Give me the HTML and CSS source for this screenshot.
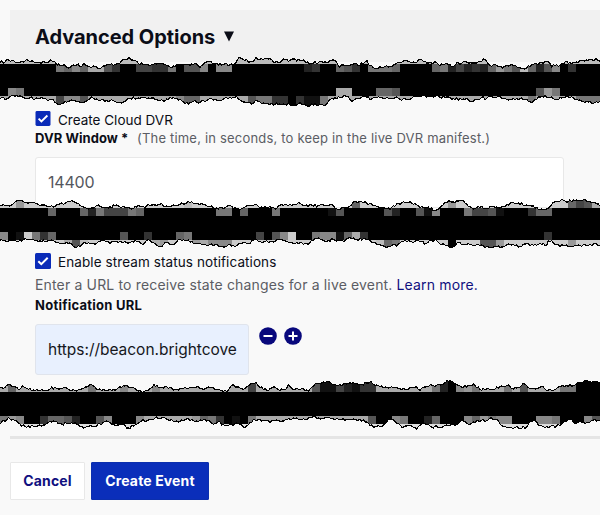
FILE: index.html
```html
<!DOCTYPE html>
<html lang="en">
<head>
<meta charset="utf-8">
<title>Advanced Options</title>
<link rel="stylesheet" href="styles.css">
</head>
<body>
<main class="page">
  <header class="panel-head"><h1>Advanced Options</h1><svg class="caret" viewBox="0 0 10 11"><path d="M0 .5h10L5 10.5z"/></svg></header>

  <section class="dvr">
    <label class="check"><svg class="box" viewBox="0 0 16 16"><rect width="16" height="16" rx="1.5"/><path d="M3.3 8.2l3 3L12.7 4.8"/></svg><span class="t-create">Create Cloud DVR</span></label>
    <div class="field-label"><b class="t-window">DVR Window *</b><span class="t-hint">(The time, in seconds, to keep in the live DVR manifest.)</span></div>
    <div class="input wide"><span class="t-num">14400</span></div>
  </section>

  <section class="notify">
    <label class="check"><svg class="box" viewBox="0 0 16 16"><rect width="16" height="16" rx="1.5"/><path d="M3.3 8.2l3 3L12.7 4.8"/></svg><span class="t-enable">Enable stream status notifications</span></label>
    <p class="help"><span class="t-help">Enter a URL to receive state changes for a live event.</span><a class="t-learn">Learn more.</a></p>
    <b class="url-label">Notification URL</b>
    <div class="url-row">
      <div class="input url"><span class="t-url">https://beacon.brightcove</span></div>
      <svg class="round" viewBox="0 0 18 18"><circle cx="9" cy="9" r="8.8"/><path d="M4.5 9h9"/></svg>
      <svg class="round" viewBox="0 0 18 18"><circle cx="9" cy="9" r="8.8"/><path d="M4.5 9h9M9 4.5v9"/></svg>
    </div>
  </section>

  <footer class="actions">
    <button class="cancel"><span>Cancel</span></button>
    <button class="create"><span>Create Event</span></button>
  </footer>
  <svg class="tears" viewBox="0 0 1800 1545"></svg>
</main>
<script src="tears.js"></script>
</body>
</html>
```
FILE: styles.css
```css
* { box-sizing: border-box; }
body { margin: 0; background: #f9f9f9; color: #0b0d17; font-family: Inter, "Liberation Sans", sans-serif; }
.page { position: relative; width: 600px; height: 515px; padding: 10px 0 0 10px; overflow: hidden; }
.tears { position: absolute; left: 0; top: 0; width: 600px; height: 515px; pointer-events: none; }
.panel-head { height: 52px; padding-left: 25px; display: flex; align-items: center; background: #f1f1f1; }
h1 { margin: 2px 9px 0 0; font-size: 20px; line-height: 26px; font-weight: 700; letter-spacing: -.04px; white-space: nowrap; }
.caret { width: 10px; height: 11px; fill: #0b0d17; }
.dvr { height: 189px; padding: 48px 0 0 25px; }
.notify { height: 185px; padding: 2px 0 0 25px; }
.check { display: flex; height: 19px; gap: 7px; font-size: 13.5px; line-height: 20px; white-space: nowrap; }
.notify .check { line-height: 18px; letter-spacing: .09px; }
.box { width: 16px; height: 16px; margin-top: 0; fill: #0a2bb8; }
.box path { fill: none; stroke: #fff; stroke-width: 2; }
.dvr .box { height: 15px; width: 16px; margin-top: 1px; }
.field-label { display: flex; height: 28px; font-size: 13px; line-height: 19px; white-space: nowrap; }
.t-window { width: 102px; letter-spacing: .05px; }
.t-hint { color: #5b5d64; letter-spacing: .19px; }
.input { border: 1px solid #e8e8e8; border-radius: 3px; background: #fff; padding: 0 12px; font-size: 16px; line-height: 49px; height: 51px; white-space: nowrap; }
.wide { width: 529px; color: #55575e; }
.t-num { letter-spacing: -.2px; }
.help { display: flex; gap: 4px; margin: 3px 0 0; font-size: 14px; line-height: 20px; color: #5b5d64; letter-spacing: .16px; white-space: nowrap; }
.t-learn { color: #10107f; }
.url-label { display: block; font-size: 13px; line-height: 20px; letter-spacing: .25px; }
.url-row { display: flex; margin-top: 9px; }
.url { width: 214px; background: #e8f0fe; border-color: #e0e4ec; color: #15171c; margin-right: 10px; font-size: 15.5px; }
.t-url { letter-spacing: -.03px; }
.round { width: 18px; height: 18px; margin: 3px 7px 0 0; fill: #08087c; }
.round path { fill: none; stroke: #fff; stroke-width: 2; }
.actions { display: flex; gap: 6px; border-top: 3px solid #e5e5e5; padding-top: 23px; }
button { font: 700 14px/36px Inter, sans-serif; letter-spacing: .14px; padding: 0; border-radius: 1px; height: 38px; white-space: nowrap; }
.cancel { width: 75px; border: 1px solid #e8e8e8; background: #fff; color: #10107f; }
.create { width: 118px; border: 1px solid #0b2fae; background: #0a2eba; color: #fff; }
```
FILE: tears.js
```js
// Torn bands: edge points use a grid of three units per pixel,
// "column:digits" strings give the grey of successive 24-unit tiles.
const bands = [
  {
    oy: 0, rows: [168, 192, 264, 288],
    top: "0,187 15,186 20,179 32,184 40,181 48,187 60,187 75,183 80,178 87,183 97,182 103,187 145,187 152,179 160,184 165,186 172,195 180,196 195,195 205,204 215,197 225,198 235,192 243,200 252,190 262,198 280,198 300,206 315,198 330,193 350,192 365,183 378,180 387,173 395,180 405,182 415,190 430,194 460,193 490,192 505,198 515,203 530,193 590,192 600,202 610,193 620,186 632,184 645,192 665,195 690,193 702,195 712,180 720,173 735,181 755,184 768,173 790,179 805,177 820,186 840,187 850,177 870,182 880,177 900,182 912,180 918,189 955,188 965,184 985,186 997,180 1010,187 1018,202 1030,195 1045,196 1060,192 1080,195 1095,186 1101,182 1110,198 1120,203 1140,200 1170,199 1185,194 1200,186 1215,181 1230,186 1250,187 1258,178 1270,184 1310,188 1320,197 1340,190 1350,194 1360,200 1375,187 1380,194 1392,184 1402,188 1425,189 1440,184 1455,179 1465,192 1475,199 1485,193 1497,199 1508,204 1520,197 1545,195 1560,203 1580,204 1595,195 1605,190 1630,190 1645,186 1655,200 1670,194 1680,197 1690,192 1697,184 1705,190 1725,189 1740,181 1780,181 1788,174 1800,183",
    bottom: "0,297 10,292 20,297 40,287 55,290 70,292 85,296 95,291 105,297 130,296 145,302 160,300 180,315 195,304 215,300 230,305 250,308 275,291 290,297 320,301 345,304 370,306 390,295 430,292 455,294 475,301 495,303 510,292 530,295 550,306 565,313 580,304 600,307 625,298 650,301 670,298 690,292 710,290 720,300 735,306 755,313 770,301 785,311 800,310 825,313 850,312 870,314 890,315 900,308 915,314 925,318 935,311 955,316 970,316 985,304 1000,297 1015,290 1040,290 1055,304 1075,296 1100,291 1110,298 1125,292 1135,290 1150,295 1190,291 1200,298 1220,299 1232,297 1240,290 1280,291 1340,291 1360,296 1390,297 1415,304 1430,298 1450,291 1455,300 1465,290 1500,290 1530,298 1560,296 1580,298 1595,308 1605,297 1630,291 1655,291 1670,298 1690,292 1715,290 1725,298 1745,303 1765,306 1780,310 1790,305 1800,304",
    tone: ["b", "0", "0", "a"],
    tiles: ["", "7:7686aa53 17:44337 23:558 27:88 38:23 42:653 46:7776 54:67242326975b6258 71:3", "1:87 42:aa 47:665 67:597", "7:4885 22:866 31:5773303117 66:7 72:777"]
  },
  {
    oy: 300, rows: [300, 324, 396, 420],
    top: "0,315 20,316 30,318 45,306 60,302 75,308 90,306 105,309 120,317 140,319 160,321 175,313 195,310 210,304 230,309 240,316 255,322 270,326 290,317 320,322 345,318 370,319 395,327 415,316 430,320 455,315 480,313 500,318 525,317 550,312 565,304 590,310 610,314 625,320 650,324 670,325 690,316 700,325 720,328 740,318 765,312 785,321 805,322 825,327 845,314 865,317 900,310 920,315 940,319 960,315 990,314 1005,324 1020,328 1050,318 1065,303 1080,303 1100,309 1130,319 1155,324 1170,328 1190,312 1215,307 1245,311 1260,323 1280,322 1305,331 1320,322 1335,307 1350,303 1365,308 1390,303 1405,320 1420,327 1445,319 1455,326 1480,320 1500,324 1520,314 1540,307 1555,309 1580,315 1600,318 1615,328 1640,327 1655,314 1670,304 1690,301 1705,305 1720,300 1750,299 1765,305 1780,307 1800,318",
    bottom: "0,420 20,425 40,421 65,423 75,416 90,419 115,425 145,421 165,424 180,432 205,430 230,443 245,434 265,428 290,430 310,422 330,430 350,424 380,428 405,421 430,434 445,419 465,430 480,440 500,428 520,434 535,418 560,422 580,430 605,433 625,437 650,433 670,441 690,433 705,440 725,431 750,430 760,421 780,424 800,422 820,426 840,418 860,424 880,430 900,428 910,434 930,427 940,420 960,417 980,424 1000,418 1030,424 1050,413 1065,419 1090,416 1110,421 1135,434 1155,440 1180,433 1190,440 1205,424 1260,425 1278,431 1290,420 1310,422 1325,433 1345,438 1355,443 1370,430 1400,433 1440,437 1460,440 1485,438 1505,441 1525,432 1540,434 1560,440 1575,432 1600,436 1620,430 1640,436 1645,421 1660,428 1680,440 1700,435 1720,440 1740,436 1760,437 1780,432 1800,436",
    tone: ["c", "0", "0", "c"],
    tiles: ["2:9 23:b 44:6 56:9 71:645a", "6:6 10:62744476 27:77 30:6 34:7 41:15 48:52 52:518 58:74451 66:366", "0:8 2:1c736 15:5 18:3 22:67 32:4 34:58c 39:78816a3 68:3", "8:a5b 19:a9 24:9a888 47:b67 56:0 60:559 71:9"]
  },
  {
    oy: 1125, rows: [27, 51, 123, 147],
    top: "0,38 15,37 25,29 40,34 60,42 68,32 80,40 100,45 120,48 145,45 165,36 180,42 195,36 215,46 235,44 255,36 275,29 295,44 320,46 345,46 365,37 378,30 395,38 415,49 435,48 450,40 462,29 480,38 495,35 515,40 535,45 555,38 575,38 595,35 612,43 625,36 645,43 665,47 685,46 697,30 712,36 730,43 745,32 768,23 780,37 800,46 822,35 840,47 855,44 865,30 880,43 900,43 910,41 925,48 940,34 950,26 965,24 980,19 995,26 1020,29 1040,27 1060,23 1080,28 1100,24 1112,19 1125,31 1145,33 1170,38 1190,37 1215,43 1235,38 1248,34 1260,47 1275,36 1300,32 1325,29 1337,22 1350,17 1365,27 1390,36 1420,27 1440,43 1480,43 1500,35 1525,30 1540,42 1555,38 1570,25 1585,38 1605,42 1628,34 1645,46 1670,40 1700,31 1720,32 1740,24 1760,18 1775,22 1790,19 1800,22",
    bottom: "0,147 25,128 40,134 55,143 65,154 85,152 105,155 130,150 145,143 165,139 185,147 200,145 215,143 230,148 255,158 280,155 300,147 320,138 345,152 370,149 385,159 405,150 425,137 445,135 465,129 495,129 515,134 535,141 550,136 575,133 590,138 615,133 635,145 655,140 675,152 695,148 720,148 735,158 750,143 765,135 790,136 810,142 830,135 850,138 870,132 900,133 915,134 935,127 1000,132 1050,135 1080,133 1095,141 1110,151 1130,155 1150,150 1165,132 1180,134 1195,146 1210,157 1230,152 1250,162 1265,148 1275,145 1295,156 1330,154 1350,151 1370,149 1385,137 1410,148 1435,138 1460,137 1470,129 1495,138 1510,155 1545,158 1580,156 1590,138 1602,134 1620,153 1640,155 1680,152 1695,139 1710,132 1725,145 1745,141 1760,143 1780,135 1800,137",
    tone: ["a", "0", "a", "d"],
    tiles: ["1:6 11:7 15:8 19:8 31:4 39:51142133 54:720897 63:7 65:5 70:77000", "", "0:798003665200580008 24:9673010 31:7 46:500870026000869788000887000857", ""]
  }
];

let seed = 7;
const rand = () => (seed = (seed * 16807) % 2147483647) / 2147483647;
const edge = (text, oy) => {
  const p = text.split(" ").map(s => s.split(",").map(Number));
  const out = [];
  for (let i = 0; i < p.length - 1; i++) {
    const [x0, y0] = p[i], [x1, y1] = p[i + 1];
    const n = Math.max(1, Math.round((x1 - x0) / 5));
    for (let k = 0; k < n; k++) {
      const j = k ? (rand() - 0.5) * 8 : 0;
      out.push([x0 + (x1 - x0) * k / n, y0 + (y1 - y0) * k / n + oy + j]);
    }
  }
  const last = p[p.length - 1];
  out.push([last[0], last[1] + oy]);
  return out;
};
const join = pts => pts.map(q => q[0].toFixed(1) + " " + q[1].toFixed(1)).join("L");

let svg = "";
bands.forEach((b, n) => {
  const oy = b.oy;
  const t = edge(b.top, oy), m = edge(b.bottom, oy);
  svg += `<clipPath id="band${n}"><path d="M${join(t)}L${join(m.slice().reverse())}Z"/></clipPath><g clip-path="url(#band${n})" shape-rendering="crispEdges">`;
  svg += `<rect y="${b.rows[0] + oy - 24}" width="1800" height="190" fill="#000"/>`;
  b.rows.forEach((y, r) => {
    const c = b.tone[r];
    const y0 = r === 0 ? y + oy - 24 : y + oy;
    const h = r === 0 || r === 3 ? 48 : 24;
    svg += `<rect y="${y0}" width="1800" height="${h}" fill="#${c + c + c}"/>`;
    b.tiles[r].split(" ").filter(Boolean).forEach(run => {
      const [col, digits] = run.split(":");
      [...digits].forEach((d, i) => {
        svg += `<rect x="${(+col + i) * 24}" y="${y0}" width="24" height="${h}" fill="#${d + d + d}"/>`;
      });
    });
  });
  svg += `</g><path d="M${join(t)}M${join(m)}" fill="none" stroke="#000" stroke-width="3.4" shape-rendering="crispEdges"/>`;
});
document.querySelector(".tears").innerHTML = svg;
```
